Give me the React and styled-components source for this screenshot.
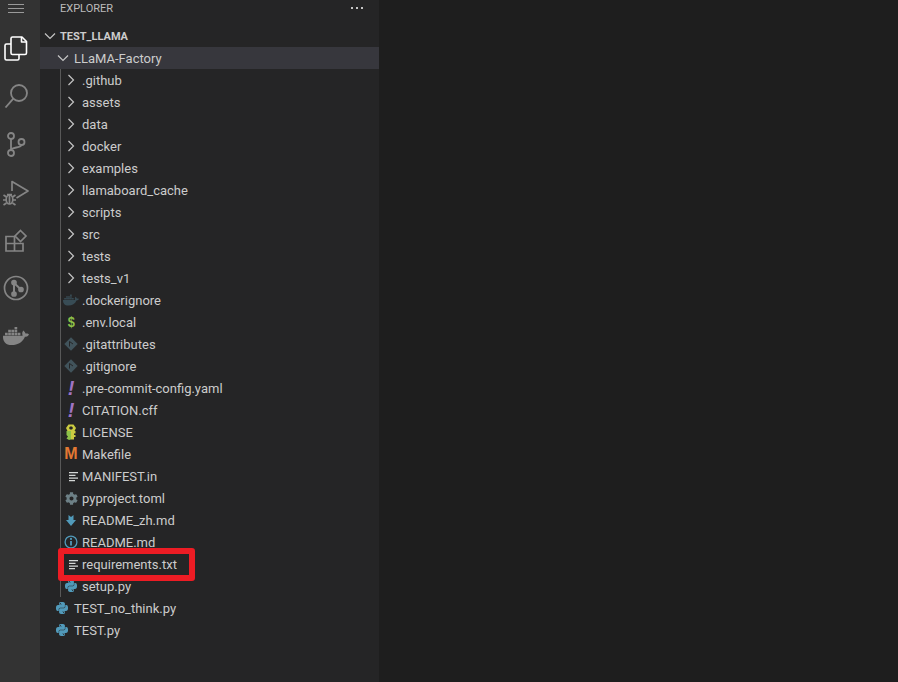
import React from "react";
import styled, { createGlobalStyle } from "styled-components";
import { FaDocker, FaCog } from "react-icons/fa";
import { SiPython } from "react-icons/si";

const Global = createGlobalStyle`
  html, body { margin: 0; padding: 0; background: #1e1e1e; }
  #root { width: 898px; height: 682px; overflow: hidden; }
`;

const Page = styled.div`
  position: relative;
  display: flex;
  width: 898px;
  height: 682px;
  overflow: hidden;
  font-family: Roboto, "Noto Sans", sans-serif;
  font-size: 13px;
  color: #cccccc;
`;

const ActivityBar = styled.nav`
  width: 40px;
  flex: none;
  display: flex;
  flex-direction: column;
  background: #333333;
`;

const MenuButton = styled.div`
  height: 24px;
  display: flex;
  flex-direction: column;
  gap: 3px;
  padding: 4px 0 0 8px;
  box-sizing: border-box;
`;

const MenuLine = styled.span`
  display: block;
  width: 16px;
  height: 1px;
  background: #9a9a9a;
`;

const ActivityItem = styled.div`
  width: 32px;
  height: 48px;
  display: flex;
  align-items: center;
  justify-content: center;
  color: ${(p) => (p.$active ? "#ffffff" : "#858585")};
`;

const SideBar = styled.aside`
  width: 339px;
  flex: none;
  background: #252526;
`;

const Title = styled.header`
  height: 25px;
  display: flex;
  justify-content: space-between;
  padding: 0 16px 9px 20px;
  box-sizing: border-box;
  align-items: center;
  font-size: 11px;
  color: #bbbbbb;
`;

const Dots = styled.div`
  display: flex;
  gap: 3px;
`;

const Dot = styled.span`
  width: 2px;
  height: 2px;
  background: #c5c5c5;
`;

const Row = styled.div`
  height: 22px;
  display: flex;
  align-items: center;
  padding-left: ${(p) => p.$pad}px;
  background: ${(p) => (p.$selected ? "#37373d" : "transparent")};
  font-weight: ${(p) => (p.$bold ? 700 : 400)};
  font-size: ${(p) => (p.$bold ? "11px" : "inherit")};
  white-space: nowrap;
`;

const IconCell = styled.span`
  width: 16px;
  height: 16px;
  margin-right: ${(p) => p.$gap}px;
  flex: none;
  display: flex;
  align-items: center;
  justify-content: center;
  color: ${(p) => p.$color || "#c5c5c5"};
`;

const Glyph = styled.span`
  font-family: "Liberation Sans", sans-serif;
  font-size: ${(p) => p.$size}px;
  font-weight: 700;
  font-style: ${(p) => (p.$italic ? "italic" : "normal")};
  color: ${(p) => p.$color};
  line-height: 16px;
  transform: scaleX(${(p) => p.$squeeze || 1});
`;

const Guide = styled.div`
  margin-left: 20px;
  border-left: 1px solid #585858;
`;

const Editor = styled.main`
  flex: 1;
  background: #1e1e1e;
`;

const Highlight = styled.div`
  position: absolute;
  left: 58px;
  top: 548px;
  width: 137px;
  height: 33px;
  box-sizing: border-box;
  border: 6px solid #ed1c24;
  border-radius: 3px;
`;

const Svg = ({ w = 24, h = 24, children, ...rest }) => (
  <svg width={w} height={h} viewBox={`0 0 ${w} ${h}`} fill="none" stroke="currentColor" {...rest}>
    {children}
  </svg>
);

const Files = () => (
  <Svg w={24} h={26} strokeWidth="1.6" strokeLinejoin="round">
    <g transform="translate(0 1)">
      <path d="M7 8H2.5A1.5 1.5 0 0 0 1 9.5v13A1.5 1.5 0 0 0 2.5 24h11a1.500 1.500 0 0 0 1.500-1.500V18" />
      <path d="M8.500 1h9.500l4.500 4.500V17a1.500 1.500 0 0 1-1.500 1.500H8.500A1.500 1.500 0 0 1 7 17V2.500A1.500 1.500 0 0 1 8.500 1Z" fill="#333333" />
      <path d="M17.500 1v5h5" />
    </g>
  </Svg>
);
const Search = () => (
  <Svg w={24} h={24} strokeWidth="1.800">
    <circle cx="15" cy="9" r="8" />
    <path d="M9.300 14.700 1.500 23.500" />
  </Svg>
);
const Branch = () => (
  <Svg w={20} h={26} strokeWidth="1.800">
    <circle cx="5" cy="5" r="3" />
    <circle cx="5" cy="22" r="3" />
    <circle cx="15.500" cy="11" r="3" />
    <path d="M5 8v11M15.500 14c0 3-10.500 2-10.500 5" />
  </Svg>
);
const Run = () => (
  <Svg w={28} h={28} strokeWidth="1.700" strokeLinejoin="round">
    <path d="M10 13V3.500L26 13 14.500 20" />
    <ellipse cx="7.500" cy="21.500" rx="3.300" ry="4.500" fill="#333333" />
    <path d="M5 16.500h5M7.500 17v9M1.500 17l3 2M1 22h3M1.500 27l3-2M13.500 17l-3 2M14 22h-3M13.500 27l-3-2" />
  </Svg>
);
const Extensions = () => (
  <Svg w={24} h={24} strokeWidth="1.700">
    <path d="M2 8.500h8.500v7H2zM2 15.500h8.500V23H2zM10.500 15.500H19V23h-8.500z" />
    <path d="m16.500 2.500 5.500 5.500-5.500 5.500L11 8z" />
  </Svg>
);
const GitLens = () => (
  <Svg w={26} h={26} strokeWidth="1.700">
    <circle cx="13" cy="13" r="11.500" />
    <circle cx="11" cy="7.500" r="2" fill="currentColor" />
    <circle cx="11" cy="19" r="2" fill="currentColor" />
    <circle cx="18" cy="14.500" r="2" fill="currentColor" />
    <path d="M11 8v11M11 8l7 6.500" strokeWidth="2" />
  </Svg>
);

const Chevron = ({ open }) => (
  <svg width="16" height="16" viewBox="0 0 16 16" fill="none" stroke="currentColor" strokeWidth="1.200">
    {open ? <path d="m3 5.500 5 5 5-5" /> : <path d="m5.500 3 5 5-5 5" />}
  </svg>
);
const Lines = () => (
  <svg width="16" height="16" viewBox="0 0 16 16" fill="currentColor" stroke="none">
    <path d="M6 4h9v1.300H6zM6 6.700h6.500V8H6zM6 9.400h9v1.300H6zM6 12h6v1.300H6z" />
  </svg>
);
const GitDiamond = () => (
  <svg width="16" height="16" viewBox="0 0 16 16" fill="currentColor" stroke="none">
    <path d="M8 1.300 14.700 8 8 14.700 1.300 8z" />
    <path d="M6.500 5.500v5M6.500 5.500 10 8" stroke="#252526" strokeWidth="1" />
  </svg>
);
const Key = () => (
  <svg width="16" height="18" viewBox="0 0 16 18" fill="none" stroke="none">
    <path d="M5.500 1.500h5L13 5l-1.500 3h-7L3 5zM7 3.500 6 5l1 1.500h2L10 5 9 3.500z" fill="#cbcb41" fillRule="evenodd" />
    <path d="M3.500 8H8v8.500L6 17l-2.500-1.500L5 13.500 3.500 12z" fill="#8dc149" />
    <path d="M8 8h4.500v2.500H11V12h1.500v2H11v2.500H8z" fill="#cbcb41" />
  </svg>
);
const ArrowDown = () => (
  <svg width="16" height="16" viewBox="0 0 16 16" fill="currentColor" stroke="none">
    <path d="M5.500 3 8 5l2.500-2v5H13l-5 6-5-6h2.500z" />
  </svg>
);
const Info = () => (
  <svg width="14" height="14" viewBox="0 0 14 14" fill="none" stroke="currentColor" strokeWidth="1.300">
    <circle cx="7" cy="7" r="5.900" />
    <path d="M7 6v4.500" strokeWidth="1.800" />
    <circle cx="7" cy="3.900" r="1.100" fill="currentColor" stroke="none" />
  </svg>
);

const fileIcons = {
  docker: { color: "#384c55", node: <FaDocker size={16} /> },
  env: { node: <Glyph $size={15} $squeeze={0.85} $color="#8dc149">$</Glyph> },
  git: { color: "#41535b", node: <GitDiamond /> },
  yaml: { node: <Glyph $size={20} $italic $color="#a074c4">!</Glyph> },
  key: { node: <Key /> },
  make: { node: <Glyph $size={16} $color="#e37933">M</Glyph> },
  lines: { color: "#d4d7d6", node: <Lines /> },
  gear: { color: "#6d8086", node: <FaCog size={13} /> },
  arrow: { color: "#519aba", node: <ArrowDown /> },
  info: { color: "#519aba", node: <Info /> },
  py: { color: "#519aba", node: <SiPython size={12} /> },
};

const folders = [".github", "assets", "data", "docker", "examples", "llamaboard_cache", "scripts", "src", "tests", "tests_v1"];
const files = [
  [".dockerignore", "docker"],
  [".env.local", "env"],
  [".gitattributes", "git"],
  [".gitignore", "git"],
  [".pre-commit-config.yaml", "yaml"],
  ["CITATION.cff", "yaml"],
  ["LICENSE", "key"],
  ["Makefile", "make"],
  ["MANIFEST.in", "lines"],
  ["pyproject.toml", "gear"],
  ["README_zh.md", "arrow"],
  ["README.md", "info"],
  ["requirements.txt", "lines"],
  ["setup.py", "py"],
];

const FileRow = ({ name, icon, pad, gap }) => (
  <Row $pad={pad}>
    <IconCell $gap={gap} $color={fileIcons[icon].color}>{fileIcons[icon].node}</IconCell>
    {name}
  </Row>
);

export default function App() {
  return (
    <Page>
      <Global />
      <ActivityBar>
        <MenuButton>
          <MenuLine />
          <MenuLine />
          <MenuLine />
        </MenuButton>
        <ActivityItem $active><Files /></ActivityItem>
        <ActivityItem><Search /></ActivityItem>
        <ActivityItem><Branch /></ActivityItem>
        <ActivityItem><Run /></ActivityItem>
        <ActivityItem><Extensions /></ActivityItem>
        <ActivityItem><GitLens /></ActivityItem>
        <ActivityItem><FaDocker size={26} /></ActivityItem>
      </ActivityBar>
      <SideBar>
        <Title>
          <span>EXPLORER</span>
          <Dots>
            <Dot />
            <Dot />
            <Dot />
          </Dots>
        </Title>
        <Row $pad={2} $bold>
          <IconCell $gap={2}><Chevron open /></IconCell>
          TEST_LLAMA
        </Row>
        <Row $pad={15} $selected>
          <IconCell $gap={3}><Chevron open /></IconCell>
          LLaMA-Factory
        </Row>
        <Guide>
          {folders.map((f) => (
            <Row key={f} $pad={2}>
              <IconCell $gap={3}><Chevron /></IconCell>
              {f}
            </Row>
          ))}
          {files.map(([n, i]) => (
            <FileRow key={n} name={n} icon={i} pad={2} gap={3} />
          ))}
        </Guide>
        <FileRow name="TEST_no_think.py" icon="py" pad={14} gap={4} />
        <FileRow name="TEST.py" icon="py" pad={14} gap={4} />
      </SideBar>
      <Editor />
      <Highlight />
    </Page>
  );
}
